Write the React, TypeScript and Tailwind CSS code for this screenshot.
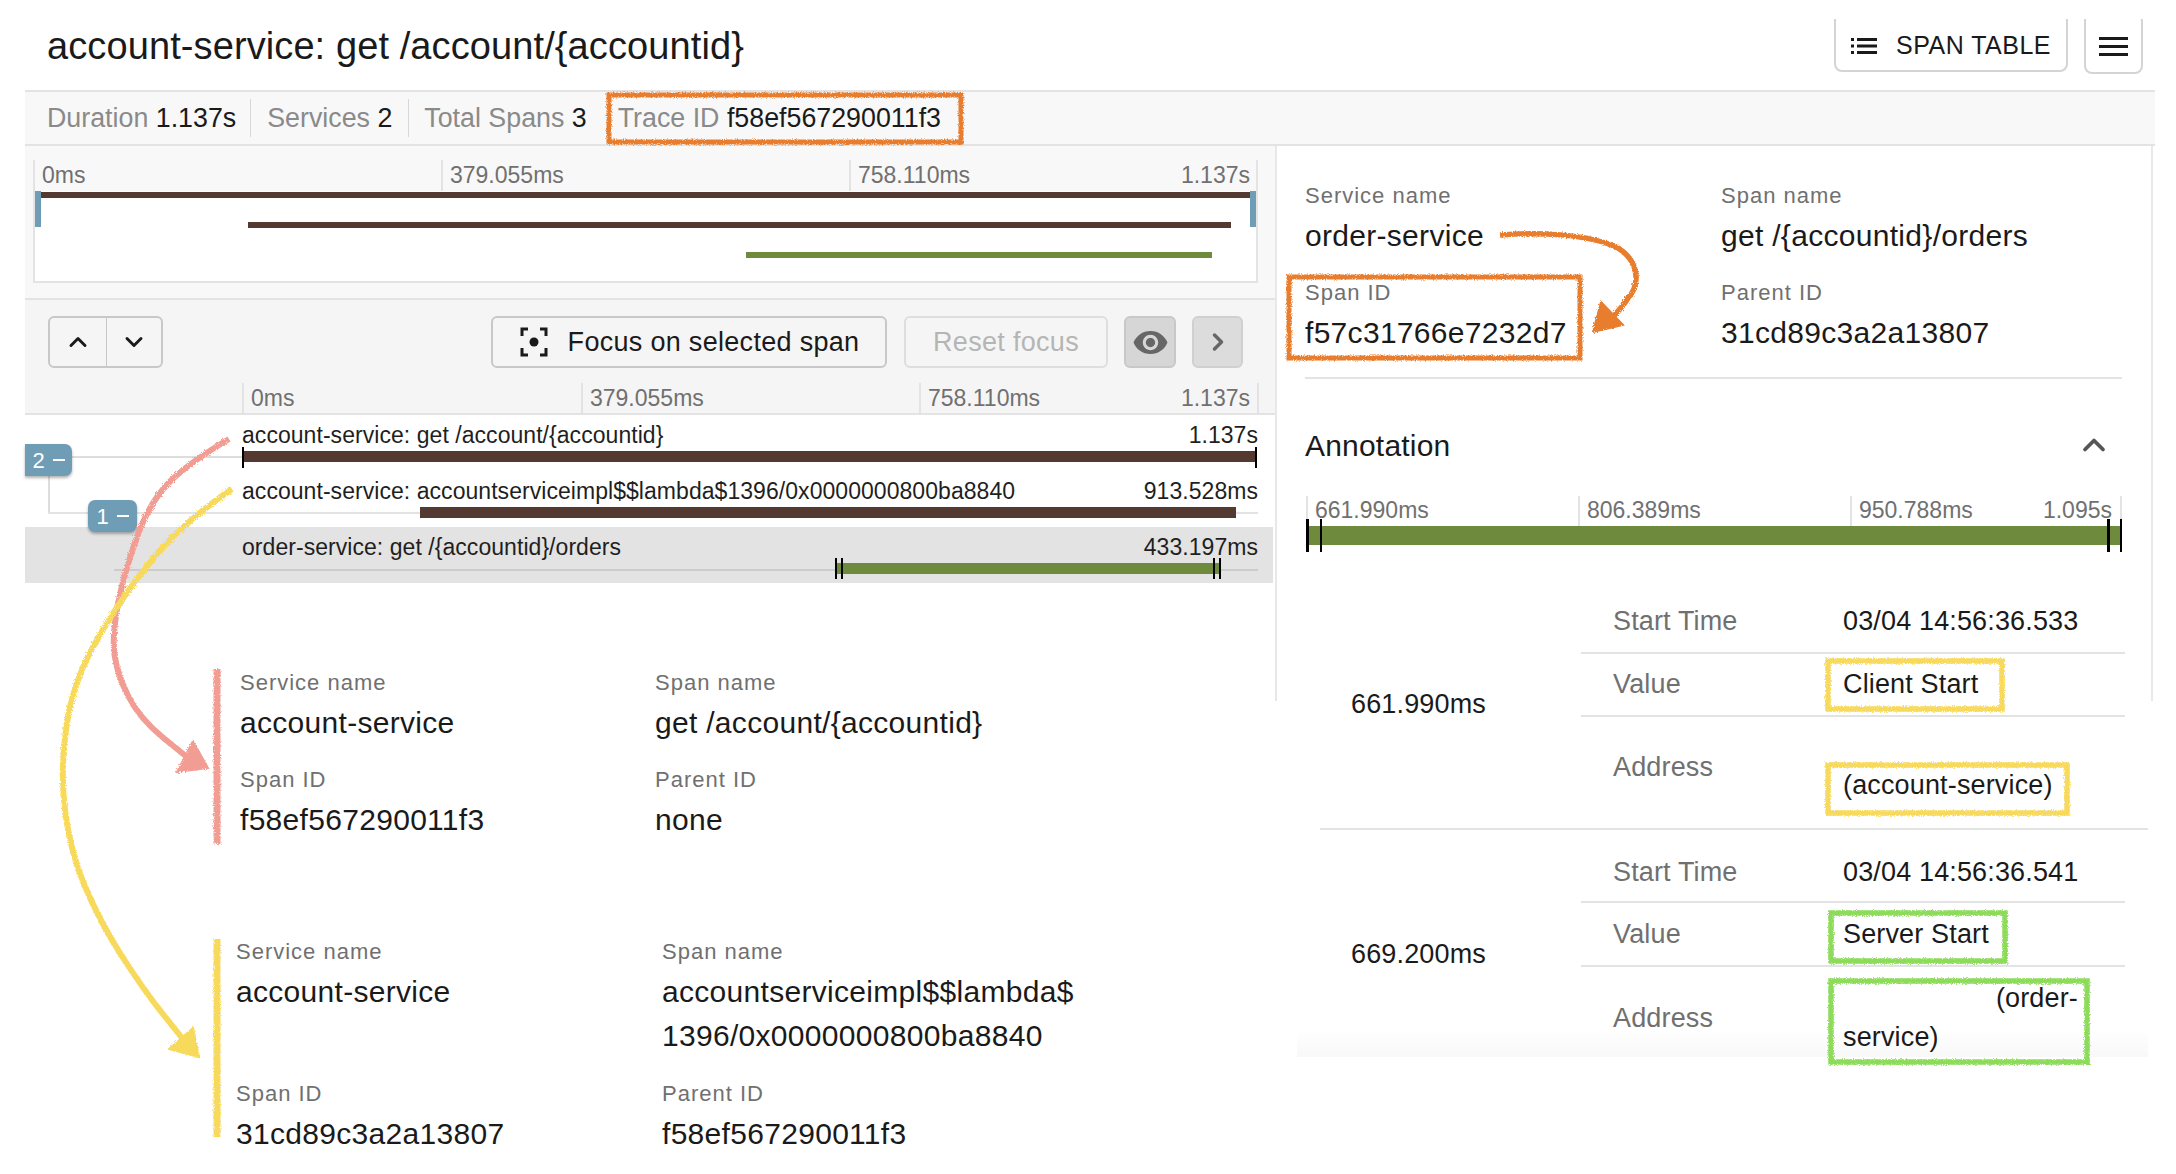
import React from 'react';
import { ChevronUp, ChevronDown, ChevronRight } from 'lucide-react';

const Ruler = ({ labels, className, endClass }: { labels: string[]; className: string; endClass: string }) => (
  <div className={className}>
    {labels.map((t, i) => (
      <div key={t} className={`border-l-2 border-[#e3e3e3] pl-[7px] relative ${i === labels.length - 1 ? 'border-r-2' : ''}`}>
        <span>{i === labels.length - 1 ? t.split('|')[0] : t}</span>
        {i === labels.length - 1 && <span className={`absolute top-0 ${endClass}`}>{t.split('|')[1]}</span>}
      </div>
    ))}
  </div>
);

const Detail = ({ label, value, lines }: { label: string; value?: string; lines?: string[] }) => (
  <div>
    <div className="h-[30px] leading-[30px] text-[22px] tracking-[1px] text-[#707070]">{label}</div>
    {value && <div className="mt-[5px] h-[40px] leading-[40px] text-[30px] tracking-[0.3px] text-[#1a1a1a]">{value}</div>}
    {lines && (
      <div className="mt-[3px] leading-[44px] text-[30px] tracking-[0.3px] text-[#1a1a1a]">
        {lines.map((l) => <div key={l}>{l}</div>)}
      </div>
    )}
  </div>
);

const SpanRow = ({ name, time, barClass, color, selected, ticks, lineClass }: {
  name: string; time: string; barClass: string; color: string; selected?: boolean; ticks?: React.ReactNode; lineClass: string;
}) => (
  <div className={`relative h-[56px] pl-[217px] ${selected ? 'bg-[#e3e3e3] mr-[2px] pr-[15px]' : 'pr-[17px]'}`}>
    <div className={`absolute h-[2px] ${lineClass}`} />
    <div className="flex h-[36px] pt-[4px] justify-between leading-[32px] text-[23px] tracking-[0.05px] text-[#1f1f1f]">
      <span>{name}</span>
      <span>{time}</span>
    </div>
    <div className={`relative h-[11px] ${barClass} ${color}`}>{ticks}</div>
  </div>
);

const Badge = ({ n, className }: { n: string; className: string }) => (
  <div className={`absolute z-10 flex items-center justify-center gap-[8px] h-[32px] bg-[#6f9db5] text-white text-[22px] shadow-[0_2px_3px_rgba(0,0,0,0.3)] ${className}`}>
    <span>{n}</span>
    <span className="w-[12px] h-[2px] bg-white" />
  </div>
);

const AnnRow = ({ label, className, labelClass, children, last }: { label: string; className: string; labelClass?: string; children: React.ReactNode; last?: boolean }) => (
  <div className={`flex ${className} ${last ? '' : 'border-b-2 border-[#e3e3e3]'}`}>
    <div className={`w-[262px] pl-[32px] text-[#707070] flex items-center ${labelClass ?? ''}`}>{label}</div>
    <div className="flex-1">{children}</div>
  </div>
);

// smooth line through hand-picked points, for the sketched arrows
const smooth = (pts: number[][]) => {
  let d = `M${pts[0][0]} ${pts[0][1]}`;
  for (let i = 1; i < pts.length - 1; i++) {
    const mx = (pts[i][0] + pts[i + 1][0]) / 2;
    const my = (pts[i][1] + pts[i + 1][1]) / 2;
    d += `Q${pts[i][0]} ${pts[i][1]} ${mx} ${my}`;
  }
  const end = pts[pts.length - 1];
  return `${d}L${end[0]} ${end[1]}`;
};

const redArrow = [[229, 439], [190, 462], [150, 501], [124, 573], [112, 635], [117, 674], [140, 719], [187, 757]];
const yellowArrow = [[232, 489], [200, 511], [157, 552], [113, 611], [73, 683], [60, 769], [70, 851], [100, 922], [143, 989], [182, 1038]];

const Rough = () => (
  <svg className="absolute inset-0 z-20 pointer-events-none" width="2176" height="1174" viewBox="0 0 2176 1174" fill="none">
    <defs>
      <filter id="chalk" x="-5%" y="-5%" width="110%" height="110%">
        <feTurbulence type="fractalNoise" baseFrequency="0.9" numOctaves="2" seed="4" />
        <feDisplacementMap in="SourceGraphic" scale="4" />
      </filter>
    </defs>
    <g filter="url(#chalk)">
      {/* orange */}
      <g stroke="#e87d2e" strokeWidth="5">
        <rect x="609" y="95" width="352" height="47" />
        <rect x="1289" y="277" width="291" height="81" />
        <path d="M1500 235C1540 232 1590 234 1618 248C1640 262 1640 285 1628 298C1622 308 1615 314 1609 322" strokeWidth="5.5" />
      </g>
      <path d="M1601 302L1593 332L1623 325Z" fill="#e87d2e" stroke="#e87d2e" strokeWidth="2" />
      {/* red */}
      <g stroke="#f29d94">
        <path d={smooth(redArrow)} strokeWidth="6" />
        <path d="M217 669V844" strokeWidth="7" />
      </g>
      <path d="M193 741L177 772L208 768Z" fill="#f29d94" stroke="#f29d94" strokeWidth="2" />
      {/* yellow */}
      <g stroke="#f7d95c">
        <path d={smooth(yellowArrow)} strokeWidth="6" />
        <path d="M217 939V1137" strokeWidth="7" />
        <rect x="1828" y="661" width="174" height="48" strokeWidth="5.5" />
        <rect x="1828" y="765" width="239" height="48" strokeWidth="5.5" />
      </g>
      <path d="M193 1028L169 1049L199 1057Z" fill="#f7d95c" stroke="#f7d95c" strokeWidth="2" />
      {/* green */}
      <g stroke="#8cdc5a" strokeWidth="5.5">
        <rect x="1831" y="913" width="174" height="48" />
        <rect x="1831" y="981" width="256" height="81" />
      </g>
    </g>
  </svg>
);

export default function App() {
  return (
    <div className="relative w-[2176px] h-[1174px] overflow-hidden bg-white text-[#1a1a1a] font-['Liberation_Sans',Arial,sans-serif]">
      <div className="pl-[25px] pr-[21px]">
        {/* header */}
        <header className="h-[90px] flex justify-between pl-[22px] pr-[12px]">
          <h1 className="pt-[22px] text-[38px] tracking-[0.1px] leading-[48px] font-normal">account-service: get /account/{'{accountid}'}</h1>
          <div className="flex gap-[16px] pt-[19px] items-start">
            <div className="h-[54px] overflow-hidden">
              <div className="-mt-[6px] w-[234px] h-[59px] pt-[6px] flex items-center justify-center gap-[19px] border-2 border-[#d4d4d4] rounded-[8px] text-[25px] tracking-[0.5px]">
                <svg width="26" height="16" viewBox="0 0 26 16" fill="#1a1a1a">
                  <path d="M0 0H3V3H0ZM6 0H26V3H6ZM0 6.5H3V9.5H0ZM6 6.5H26V9.5H6ZM0 13H3V16H0ZM6 13H26V16H6Z" />
                </svg>
                SPAN TABLE
              </div>
            </div>
            <div className="h-[56px] overflow-hidden">
              <div className="-mt-[6px] w-[59px] h-[61px] pt-[6px] flex items-center justify-center border-2 border-[#d4d4d4] rounded-[8px]">
                <svg width="29" height="19" viewBox="0 0 29 19" fill="#1a1a1a">
                  <path d="M0 0H29V3H0ZM0 8H29V11H0ZM0 16H29V19H0Z" />
                </svg>
              </div>
            </div>
          </div>
        </header>

        {/* stats */}
        <div className="h-[56px] flex items-center bg-[#f8f8f8] border-y-2 border-[#e3e3e3] pl-[22px] text-[26.8px] text-[#8a8a8a]">
          <div className="pr-[14px] border-r border-[#d8d8d8] leading-[38px]">Duration <span className="text-[#1a1a1a]">1.137s</span></div>
          <div className="px-[16px] border-r border-[#d8d8d8] leading-[38px]">Services <span className="text-[#1a1a1a]">2</span></div>
          <div className="pl-[15px] leading-[38px]">Total Spans <span className="text-[#1a1a1a]">3</span></div>
          <div className="pl-[31px] leading-[38px]">Trace ID <span className="text-[#1a1a1a]">f58ef567290011f3</span></div>
        </div>

        <div className="flex">
          {/* left column */}
          <div className="w-[1250px] shrink-0">
            <div className="h-[154px] bg-[#f8f8f8] border-b-2 border-[#e3e3e3] pt-[14px] pl-[8px]">
              <Ruler
                labels={['0ms', '379.055ms', '758.110ms|1.137s']}
                endClass="right-[6px]"
                className="grid grid-cols-[408px_408px_409px] w-[1225px] h-[31px] leading-[31px] text-[23px] text-[#707070]"
              />
              <div className="w-[1225px] h-[92px] relative bg-white border-2 border-t-0 border-[#e3e3e3] pt-[1px]">
                <div className="ml-[4px] w-[1214px] h-[6px] bg-[#53392f]" />
                <div className="mt-[24px] ml-[213px] w-[983px] h-[6px] bg-[#53392f]" />
                <div className="mt-[24px] ml-[711px] w-[466px] h-[6px] bg-[#6e8b3d]" />
                <div className="absolute left-0 top-0 w-[6px] h-[36px] bg-[#6f9db5]" />
                <div className="absolute right-0 top-0 w-[6px] h-[36px] bg-[#6f9db5]" />
              </div>
            </div>

            <div className="h-[115px] bg-[#f5f5f5] border-b-2 border-[#e3e3e3] pt-[16px]">
              <div className="flex h-[52px] pl-[23px] pr-[32px] items-stretch text-[27px] tracking-[0.3px]">
                <div className="flex w-[115px] border-2 border-[#c8c8c8] rounded-[6px]">
                  <div className="w-[57px] flex items-center justify-center border-r border-[#c8c8c8]"><ChevronUp size={28} strokeWidth={2.5} /></div>
                  <div className="flex-1 flex items-center justify-center"><ChevronDown size={28} strokeWidth={2.5} /></div>
                </div>
                <div className="ml-[328px] w-[396px] flex items-center justify-center gap-[19px] border-2 border-[#c8c8c8] rounded-[6px]">
                  <svg width="30" height="30" viewBox="0 0 30 30" fill="none" stroke="#1a1a1a" strokeWidth="3">
                    <path d="M9 2H3V9M21 2H27V9M3 21V28H9M27 21V28H21" />
                    <circle cx="15" cy="15" r="4.5" fill="#1a1a1a" stroke="none" />
                  </svg>
                  Focus on selected span
                </div>
                <div className="ml-[17px] w-[204px] flex items-center justify-center border-2 border-[#dedede] rounded-[6px] text-[#b5b5b5]">Reset focus</div>
                <div className="ml-[16px] w-[52px] flex items-center justify-center bg-[#d6d6d6] border-2 border-[#c8c8c8] rounded-[6px]">
                  <svg width="37" height="37" viewBox="0 0 24 24" fill="#666666">
                    <path d="M12 4.5C7 4.5 2.73 7.61 1 12c1.73 4.39 6 7.5 11 7.5s9.27-3.11 11-7.5c-1.73-4.39-6-7.5-11-7.5zM12 17c-2.76 0-5-2.24-5-5s2.24-5 5-5 5 2.24 5 5-2.24 5-5 5zm0-8c-1.66 0-3 1.34-3 3s1.34 3 3 3 3-1.34 3-3-1.34-3-3-3z" />
                  </svg>
                </div>
                <div className="ml-[16px] w-[51px] flex items-center justify-center bg-[#dcdcdc] border-2 border-[#d0d0d0] rounded-[6px]">
                  <ChevronRight size={28} strokeWidth={3} className="text-[#666]" />
                </div>
              </div>
              <Ruler
                labels={['0ms', '379.055ms', '758.110ms|1.137s']}
                endClass="right-[7px]"
                className="mt-[15px] ml-[217px] grid grid-cols-[339px_338px_340px] w-[1017px] h-[30px] leading-[30px] text-[23px] text-[#707070]"
              />
            </div>

            {/* spans */}
            <div className="relative">
              <Badge n="2" className="left-0 top-[29px] w-[47px] rounded-r-[7px]" />
              <Badge n="1" className="left-[63px] top-[85px] w-[49px] rounded-[7px]" />
              <div className="absolute left-[23px] top-[61px] w-[2px] h-[38px] bg-[#dddddd]" />
              <div className="absolute left-[88px] top-[117px] w-[2px] h-[38px] bg-[#cccccc]" />
              <SpanRow
                name="account-service: get /account/{accountid}"
                time="1.137s"
                barClass="w-[1015px]"
                color="bg-[#53392f]"
                lineClass="left-[47px] w-[170px] top-[41px] bg-[#dddddd]"
                ticks={<>
                  <span className="absolute left-0 -top-[4px] w-[2px] h-[21px] bg-black" />
                  <span className="absolute right-0 -top-[4px] w-[2px] h-[21px] bg-black" />
                </>}
              />
              <SpanRow
                name="account-service: accountserviceimpl$$lambda$1396/0x0000000800ba8840"
                time="913.528ms"
                barClass="ml-[178px] w-[816px]"
                color="bg-[#53392f]"
                lineClass="left-[23px] w-[1210px] top-[41px] bg-[#e3e3e3]"
              />
              <SpanRow
                name="order-service: get /{accountid}/orders"
                time="433.197ms"
                barClass="ml-[595px] w-[382px]"
                color="bg-[#6e8b3d]"
                selected
                lineClass="left-[89px] w-[1144px] top-[42px] bg-[#cccccc]"
                ticks={<>
                  <span className="absolute -left-[2px] -top-[5px] w-[2px] h-[21px] bg-black" />
                  <span className="absolute left-[4px] -top-[5px] w-[2px] h-[21px] bg-black" />
                  <span className="absolute right-[4px] -top-[5px] w-[2px] h-[21px] bg-black" />
                  <span className="absolute -right-[2px] -top-[5px] w-[2px] h-[21px] bg-black" />
                </>}
              />
            </div>

            {/* span details */}
            <div className="pt-[85px] pl-[215px]">
              <div className="grid grid-cols-[415px_1fr] gap-y-[22px]">
                <Detail label="Service name" value="account-service" />
                <Detail label="Span name" value="get /account/{accountid}" />
                <Detail label="Span ID" value="f58ef567290011f3" />
                <Detail label="Parent ID" value="none" />
              </div>
            </div>
            <div className="pt-[97px] pl-[211px]">
              <div className="grid grid-cols-[426px_1fr] gap-y-[21px]">
                <Detail label="Service name" value="account-service" />
                <Detail label="Span name" lines={['accountserviceimpl$$lambda$', '1396/0x0000000800ba8840']} />
                <Detail label="Span ID" value="31cd89c3a2a13807" />
                <Detail label="Parent ID" value="f58ef567290011f3" />
              </div>
            </div>
          </div>

          {/* right column */}
          <div className="relative flex-1 min-w-0 pl-[30px]">
            <div className="absolute left-0 top-0 w-[2px] h-[555px] bg-[#e8e8e8]" />
            <div className="absolute left-[876px] top-0 w-[2px] h-[555px] bg-[#e8e8e8]" />
            <div className="w-[817px] pt-[35px] pb-[24px] border-b-2 border-[#e3e3e3] grid grid-cols-[416px_1fr] gap-y-[22px]">
              <Detail label="Service name" value="order-service" />
              <Detail label="Span name" value="get /{accountid}/orders" />
              <Detail label="Span ID" value="f57c31766e7232d7" />
              <Detail label="Parent ID" value="31cd89c3a2a13807" />
            </div>
            <div className="mt-[46px] w-[817px] flex items-center justify-between h-[40px] text-[30px] tracking-[0.2px] pr-[10px]">
              Annotation
              <ChevronUp size={36} strokeWidth={2.5} className="text-[#555]" />
            </div>
            <Ruler
              labels={['661.990ms', '806.389ms', '950.788ms|1.095s']}
              endClass="right-[8px]"
              className="mt-[31px] ml-[1px] grid grid-cols-[272px_272px_272px] w-[816px] h-[30px] leading-[28px] text-[23px] text-[#707070]"
            />
            <div className="relative ml-[1px] w-[816px] h-[19px] bg-[#6e8b3d]">
              <span className="absolute left-0 -top-[7px] w-[3px] h-[33px] bg-black" />
              <span className="absolute left-[14px] -top-[7px] w-[2px] h-[33px] bg-black" />
              <span className="absolute right-[12px] -top-[7px] w-[3px] h-[33px] bg-black" />
              <span className="absolute right-0 -top-[7px] w-[2px] h-[33px] bg-black" />
            </div>

            {/* annotation rows */}
            <div className="relative mt-[45px] -ml-[30px] text-[27px] tracking-[0.15px]">
              <div className="absolute left-[22px] right-[7px] top-[439px] h-[28px] bg-gradient-to-b from-white to-[#f8f8f8]" />
              <div className="relative ml-[45px] w-[828px] h-[240px] flex border-b-2 border-[#e3e3e3]">
                <div className="w-[261px] pl-[31px] pt-[94px] leading-[40px]">661.990ms</div>
                <div className="w-[544px]">
                  <AnnRow label="Start Time" className="h-[64px]"><div className="h-full flex items-center">03/04 14:56:36.533</div></AnnRow>
                  <AnnRow label="Value" className="h-[63px]"><div className="h-full flex items-center">Client Start</div></AnnRow>
                  <AnnRow label="Address" labelClass="pb-[10px]" className="h-[111px]" last>
                    <div className="pt-[50px] leading-[36px]">(account-service)</div>
                  </AnnRow>
                </div>
              </div>
              <div className="relative ml-[45px] w-[828px] flex">
                <div className="w-[261px] pl-[31px] pt-[104px] leading-[40px]">669.200ms</div>
                <div className="w-[544px]">
                  <AnnRow label="Start Time" labelClass="pt-[13px]" className="h-[73px]"><div className="h-full flex items-center pt-[13px]">03/04 14:56:36.541</div></AnnRow>
                  <AnnRow label="Value" className="h-[64px]"><div className="h-full flex items-center">Server Start</div></AnnRow>
                  <AnnRow label="Address" labelClass="pb-[2px]" className="h-[104px]" last>
                    <div className="pt-[12px] leading-[39px] w-[235px]">
                      <div className="text-right">(order-</div>
                      <div>service)</div>
                    </div>
                  </AnnRow>
                </div>
              </div>
            </div>
          </div>
        </div>
      </div>
      <Rough />
    </div>
  );
}
